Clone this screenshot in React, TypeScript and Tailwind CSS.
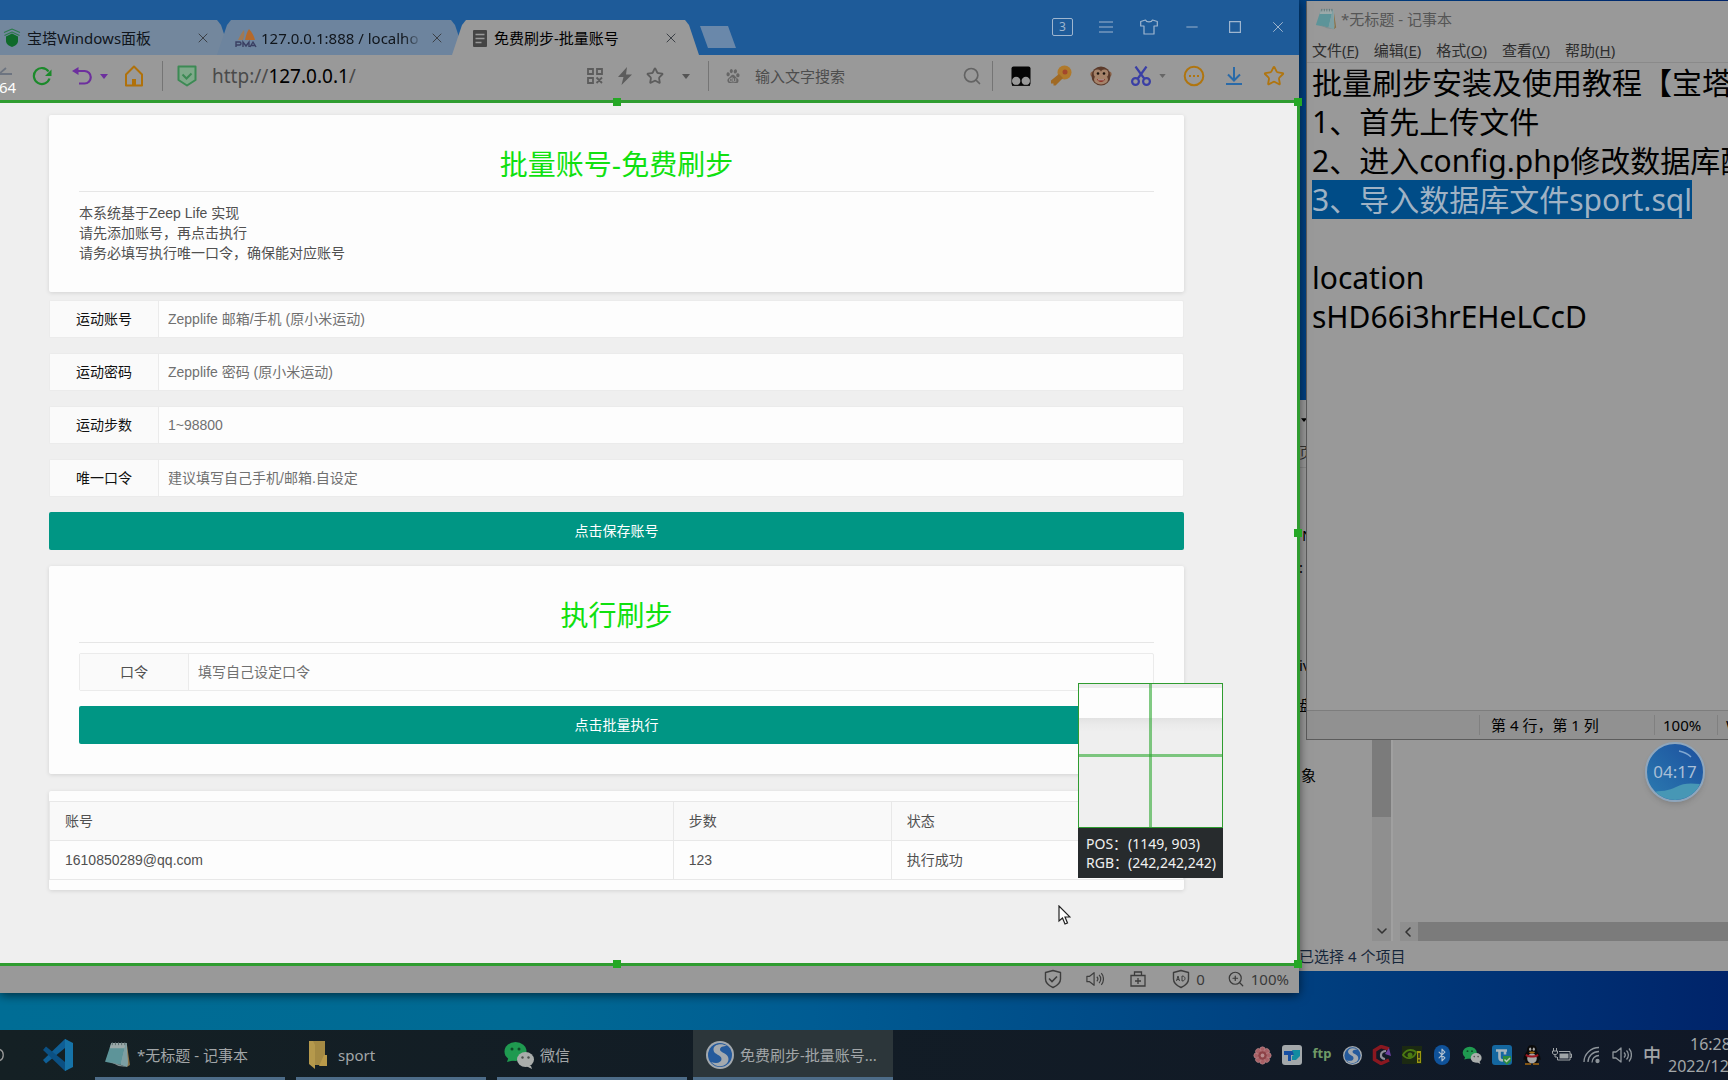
import type { ReactNode } from "react";
import {
  Bluetooth,
  ChevronDown,
  ChevronLeft,
  Menu,
  Minus,
  Search,
  Shirt,
  Square,
  Star,
  X,
  ZoomIn,
} from "lucide-react";
import { RiBaiduFill } from "react-icons/ri";

/* ---------- drawn icons ---------- */

function Caret({ className }: { className: string }) {
  return (
    <svg viewBox="0 0 8 5" className={className} fill="currentColor">
      <path d="M0 0h8L4 5z" />
    </svg>
  );
}

function TreeShield() {
  return (
    <svg viewBox="0 0 18 20" className="h-5 w-[18px] shrink-0" fill="none">
      <path d="M9 1 1 4.500M9 1l8 3.500M9 4 1.500 7.500M9 4l7.500 3.500" stroke="#2d7a4d" strokeWidth="1.200" />
      <path d="M3 8.500l6-3 6 3V13c0 3-3 5-6 6-3-1-6-3-6-6z" fill="#0f6a2b" />
    </svg>
  );
}

function PmaLogo() {
  return (
    <svg viewBox="0 0 22 20" className="h-5 w-[22px] shrink-0" fill="none">
      <path d="M3 12C5 8 7 4 9 2c1 4 0 7-1 10z" fill="#a07a55" />
      <path d="M10 12c1-5 2-8 4-11 3 3 5 7 6 11z" fill="#b5692a" />
      <path d="M1 19v-5h3.500a1.500 1.500 0 0 1 0 3H1M8 19v-5l3 4 3-4v5M15 19l3-5 3 5M16 17.500h4" stroke="#3a3f63" strokeWidth="1.400" />
    </svg>
  );
}

function DocIcon() {
  return (
    <svg viewBox="0 0 14 17" className="h-[17px] w-[14px] shrink-0">
      <rect width="14" height="17" rx="1" fill="#444" />
      <path d="M2.500 4.500h9M2.500 8.500h9M2.500 12.500h6" stroke="#999" strokeWidth="1.500" />
    </svg>
  );
}

function RefreshIcon() {
  return (
    <svg viewBox="0 0 20 20" className="size-5" fill="none" stroke="#1c8a2b" strokeWidth="2.200">
      <path d="M16.500 5.500A8 8 0 1 0 17.500 12.500" />
      <path d="M19.500 3.500v6.500h-6.500z" fill="#1c8a2b" stroke="none" />
    </svg>
  );
}

function UndoIcon() {
  return (
    <svg viewBox="0 0 20 20" className="size-5" fill="none" stroke="#6d2f9e" strokeWidth="2.200">
      <path d="M3 5h9.500a5.700 5.700 0 0 1 0 12.500H7" />
      <path d="M6.500 1v8L0 5z" fill="#6d2f9e" stroke="none" />
    </svg>
  );
}

function HomeIcon() {
  return (
    <svg viewBox="0 0 20 22" className="h-[22px] w-5" fill="none" stroke="#b0710a" strokeWidth="2">
      <path d="M2 20.500V9.500l8-8 8 8v11z" strokeLinejoin="round" />
      <path d="M8 20v-6h4v6" fill="#b0710a" stroke="none" />
    </svg>
  );
}

function SiteShield() {
  return (
    <svg viewBox="0 0 20 22" className="h-[22px] w-5" fill="#7fa98a" stroke="#3c8a54" strokeWidth="2">
      <path d="M1.500 1.500h17v13.500L10 20.500 1.500 15z" strokeLinejoin="round" />
      <path d="M5.500 9.500l4 4 5-5" fill="none" />
    </svg>
  );
}

function QrIcon() {
  return (
    <svg viewBox="0 0 16 16" className="size-4" fill="none" stroke="#5c5c5c" strokeWidth="1.800">
      <path d="M1 1h5v5H1zM10 1h5v5h-5zM1 10h5v5H1zM9.500 9.500l5.500 5.500M15 9.500 9.500 15" />
    </svg>
  );
}

function BoltIcon() {
  return (
    <svg viewBox="0 0 14 18" className="h-[18px] w-[14px]" fill="#5c5c5c">
      <path d="M9 0 0 10h5.500L3.500 18 14 7.500H8z" />
    </svg>
  );
}

function TampermonkeyIcon() {
  return (
    <svg viewBox="0 0 20 20" className="size-5">
      <rect x=".5" y=".5" width="19" height="19" rx="2" fill="#050505" />
      <circle cx="5.200" cy="15" r="4.200" fill="#999" />
      <circle cx="14.800" cy="15" r="4.200" fill="#999" />
      <path d="M1 19.300h18" stroke="#050505" />
    </svg>
  );
}

function KeyIcon() {
  return (
    <svg viewBox="0 0 22 22" className="size-[22px]">
      <circle cx="14.500" cy="7.500" r="7" fill="#b07a2c" />
      <path d="M9 9l4 4-7.500 7.500H3.500v-2H1v-3z" fill="#a06a24" />
      <circle cx="15" cy="7" r="2.500" fill="#a3472c" />
    </svg>
  );
}

function MonkeyIcon() {
  return (
    <svg viewBox="0 0 22 22" className="size-[22px]">
      <circle cx="3" cy="9" r="2.600" fill="#8a6248" />
      <circle cx="19" cy="9" r="2.600" fill="#8a6248" />
      <circle cx="11" cy="11" r="9.500" fill="#5b3a2a" />
      <ellipse cx="7.500" cy="8.500" rx="3.800" ry="4" fill="#a5836a" />
      <ellipse cx="14.500" cy="8.500" rx="3.800" ry="4" fill="#a5836a" />
      <ellipse cx="11" cy="14.500" rx="7" ry="5" fill="#a5836a" />
      <circle cx="8" cy="8.500" r="1.300" fill="#1b120d" />
      <circle cx="14" cy="8.500" r="1.300" fill="#1b120d" />
      <path d="M7 14h8c-1 4-7 4-8 0z" fill="#8d3228" />
      <path d="M8 14.300h6v1H8z" fill="#b5b0aa" />
    </svg>
  );
}

function ScissorsIcon() {
  return (
    <svg viewBox="0 0 20 20" className="size-5" fill="none" stroke="#3a3fa5" strokeWidth="2.200">
      <path d="M4.500 0.500 13.500 13M15.500 0.500 6.500 13" />
      <circle cx="4.500" cy="15.500" r="3.400" />
      <circle cx="15.500" cy="15.500" r="3.400" />
    </svg>
  );
}

function DotsCircle() {
  return (
    <svg viewBox="0 0 22 22" className="size-[22px]" fill="none" stroke="#b0750f" strokeWidth="2">
      <circle cx="11" cy="11" r="9.300" />
      <path d="M6 11h2M10 11h2M14 11h2" />
    </svg>
  );
}

function NotepadIcon({ className }: { className: string }) {
  return (
    <svg viewBox="0 0 26 26" className={className}>
      <path d="M22 3l3 20-3 2z" fill="#8a7247" />
      <path d="M8 2h14l1 20H16z" fill="#8fa5a8" />
      <path d="M7 2h14l-5 21L1 20z" fill="#5d9499" />
      <path d="M7 2h14l-1 5H5.500z" fill="#9aa9a9" />
      <path d="M16 23l5-21 2 21-1 2z" fill="#7c9fa3" />
      <path d="M6 20l10 3 6 2-8-1z" fill="#7f8d8e" />
      <path d="M8 1v3M11 1v3M14 1v3M17 1v3M20 1v3" stroke="#4d6063" strokeWidth=".8" />
    </svg>
  );
}

function VsCodeIcon() {
  return (
    <svg viewBox="0 0 30 34" className="h-[34px] w-[30px]">
      <path d="M22 1l8 4v24l-8 4z" fill="#1673a8" />
      <path d="M22 1 0 22l3 3.500L22 10z" fill="#0f5f96" />
      <path d="M22 33 0 12l3-3.500L22 24z" fill="#0b5083" />
      <path d="M22 1l3 2v28l-3 2z" fill="#1673a8" />
    </svg>
  );
}

function FolderIcon() {
  return (
    <svg viewBox="0 0 20 30" className="h-[30px] w-5">
      <path d="M4 1h13v24H4z" fill="#a48a44" />
      <path d="M16 15h3v11h-8z" fill="#b99a4a" />
      <path d="M1 1h4l2 4v24l-6-5z" fill="#b5994c" />
    </svg>
  );
}

function WeChatIcon({ className }: { className: string }) {
  return (
    <svg viewBox="0 0 30 28" className={className}>
      <path d="M3 21l2-6 6 4z" fill="#1f9a50" />
      <ellipse cx="11.500" cy="10.500" rx="11" ry="9.500" fill="#1f9a50" />
      <circle cx="8" cy="8" r="1.500" fill="#0e4a28" />
      <circle cx="15" cy="8" r="1.500" fill="#0e4a28" />
      <path d="M22 25h5l1 3z" fill="#a9adab" />
      <ellipse cx="21.500" cy="18.500" rx="8.500" ry="7.500" fill="#a9adab" />
      <circle cx="18.500" cy="16.500" r="1.200" fill="#4b504d" />
      <circle cx="24.500" cy="16.500" r="1.200" fill="#4b504d" />
    </svg>
  );
}

function SogouIcon({ className }: { className: string }) {
  return (
    <svg viewBox="0 0 28 28" className={className}>
      <circle cx="14" cy="14" r="14" fill="#a3a9ae" />
      <circle cx="14" cy="14" r="12" fill="#245a9c" />
      <path d="M21 5c-6-3.500-14-1.500-13.500 4 .5 5 8 4.500 8 9 0 3.500-4.500 5-10.500 3 6 7 17.500 4.500 17.500-3C22.500 12 14 12 14 8.500 14 6 17 5 21 5z" fill="#a3a9ae" />
    </svg>
  );
}

function FlowerIcon() {
  const petals = [0, 45, 90, 135, 180, 225, 270, 315];
  return (
    <svg viewBox="0 0 20 20" className="size-[19px]">
      {petals.map((a) => (
        <circle key={a} cx="10" cy="3.800" r="2.900" fill="#a86066" stroke="#b98a8c" strokeWidth=".7" transform={`rotate(${a} 10 10)`} />
      ))}
      <circle cx="10" cy="10" r="4.500" fill="#8d4247" />
      <circle cx="10" cy="10" r="2" fill="#b98a8c" />
    </svg>
  );
}

function TodeskIcon() {
  return (
    <svg viewBox="0 0 20 20" className="size-5">
      <rect width="20" height="20" rx="3" fill="#a3a8ab" />
      <path d="M2 6h10v4H9v6H6v-6H2z" fill="#174fa3" />
      <path d="M10 5h8v6l-4 4h-4v-4l2-1z" fill="#128ba0" />
    </svg>
  );
}

function CIcon() {
  return (
    <svg viewBox="0 0 20 20" className="size-5" fill="none">
      <path d="M17 4 9 1.500 2.500 5.500v9L9 18.500l8-3.500" stroke="#8a1820" strokeWidth="3.500" />
      <path d="M14 6c-6 0-7 7-1 8" stroke="#8f8f9a" strokeWidth="2.200" />
      <path d="M17 3l2 8-6-2z" fill="#6b3fa0" />
    </svg>
  );
}

function NvidiaIcon() {
  return (
    <svg viewBox="0 0 20 18" className="h-[18px] w-5" fill="none">
      <rect width="20" height="18" fill="#1c2a12" />
      <path d="M1 9c3-6 9-6 13-3-2 7-9 8-13 3z" stroke="#4b7a12" strokeWidth="1.800" />
      <circle cx="8" cy="9" r="2.500" fill="#4b7a12" />
      <path d="M15 5h4v12h-4z" fill="#9b9610" />
      <path d="M17 7v5M17 13.500v2" stroke="#222" strokeWidth="1.500" />
    </svg>
  );
}

function TIcon() {
  return (
    <svg viewBox="0 0 20 20" className="size-5" fill="none">
      <rect width="20" height="20" rx="3" fill="#1467a0" />
      <path d="M4 5.500h11M7.500 5.500v7c0 2 1 3 3.500 3M13 5.500v4" stroke="#a7b5bd" strokeWidth="2.600" />
      <path d="M11 11h8v5l-4 4-4-4z" fill="#2c8c3c" />
      <path d="M12.500 14.500l2 2 3.500-3.500" stroke="#b8c8b8" strokeWidth="1.500" />
    </svg>
  );
}

function QQIcon() {
  return (
    <svg viewBox="0 0 18 20" className="h-5 w-[18px]">
      <path d="M9 0c4 0 5 3 5 6 2 3 4 6 3.500 9-1 0-1.500-1-1.500-1 0 3-2 5-7 5s-7-2-7-5c0 0-.5 1-1.500 1C0 12 2 9 4 6c0-3 1-6 5-6z" fill="#0a0a0a" />
      <ellipse cx="9" cy="13.500" rx="4.800" ry="5" fill="#a6a6a6" />
      <ellipse cx="7.200" cy="4.200" rx="1.100" ry="1.600" fill="#aaa" />
      <ellipse cx="10.800" cy="4.200" rx="1.100" ry="1.600" fill="#aaa" />
      <ellipse cx="9" cy="7.500" rx="3" ry="1" fill="#a86a10" />
      <path d="M3 9c4 2 8 2 12 0l.5 2c-4 2-9 2-13 0z" fill="#9c1520" />
      <path d="M2 19h6M10 19h6" stroke="#a86a10" strokeWidth="1.500" />
    </svg>
  );
}

function BatteryIcon() {
  return (
    <svg viewBox="0 0 20 14" className="h-[14px] w-5" fill="none" stroke="#a0a5a8">
      <path d="M7 3.500h11v8.500H5.500V9M18 6h1.500v3.500H18" />
      <path d="M7.500 5.500h9v5h-9z" fill="#a0a5a8" stroke="none" />
      <path d="M1.500 0v3M4.500 0v3M.5 3h5v2c0 2-5 2-5 0zM3 6v3h2" />
    </svg>
  );
}

function WifiIcon() {
  return (
    <svg viewBox="0 0 18 18" className="size-[18px]" fill="none" stroke="#8e959b" strokeWidth="1.300">
      <path d="M1 16C1 8 8 1.500 16 1.500M5 16C5 10 10 5.500 16 5.500M9 16.500C9 12.500 12 9.500 16 9.500" />
      <circle cx="14.500" cy="15" r="1.500" fill="#8e959b" />
    </svg>
  );
}

function SpeakerIcon({ className }: { className: string }) {
  return (
    <svg viewBox="0 0 20 16" className={className} fill="none" stroke="currentColor" strokeWidth="1.300">
      <path d="M1 5h3l5-4v14l-5-4H1z" strokeLinejoin="round" />
      <path d="M12 5.500c1.500 1.500 1.500 3.500 0 5M14.500 3.500c2.500 2.500 2.500 6.500 0 9M17 1.500c3.200 3.500 3.200 9.500 0 13" />
    </svg>
  );
}

function ShieldOutline({ children }: { children: ReactNode }) {
  return (
    <svg viewBox="0 0 18 20" className="h-5 w-[18px]" fill="none" stroke="#3d3d3d" strokeWidth="1.400">
      <path d="M9 1.500 16.500 3.500V10c0 4-3 6.500-7.500 8.500C4.500 16.500 1.500 14 1.500 10V3.500z" strokeLinejoin="round" />
      {children}
    </svg>
  );
}

function BoxPlusIcon() {
  return (
    <svg viewBox="0 0 16 16" className="size-4" fill="none" stroke="#3d3d3d" strokeWidth="1.300">
      <path d="M1 4.500h14v10.500H1zM4.500 4.500V1h7v3.500M8 7v6M5 10h6" />
    </svg>
  );
}

/* ---------- browser window ---------- */

const tabShape =
  "[clip-path:polygon(0_100%,10px_5px,14px_0,calc(100%_-_14px)_0,calc(100%_-_10px)_5px,100%_100%)]";

function CloseX() {
  return (
    <button type="button" aria-label="关闭标签页" className="flex size-4 shrink-0 items-center justify-center text-[#3c4046]">
      <X className="size-4" strokeWidth={1.5} />
    </button>
  );
}

function TitleBar() {
  const control = "flex h-full w-[43px] items-center justify-center";
  return (
    <header className="flex h-[55px] justify-between bg-[#1e5b99]">
      <div className="flex items-end text-[15px] leading-5 text-[#10151b]">
        <div className="flex h-[35px] w-[231px] items-center bg-[#73879d] pt-px pr-5 pl-[3px] [clip-path:polygon(0_100%,0_0,calc(100%_-_14px)_0,calc(100%_-_10px)_5px,100%_100%)]">
          <TreeShield />
          <span className="ml-1.5 grow whitespace-nowrap">宝塔Windows面板</span>
          <CloseX />
        </div>
        <div className={`-ml-3.5 flex h-[35px] w-[248px] items-center bg-[#6d849e] pt-px pr-5 pl-[18px] ${tabShape}`}>
          <PmaLogo />
          <span className="ml-1 min-w-0 grow overflow-hidden whitespace-nowrap [mask-image:linear-gradient(to_right,black_88%,transparent)]">
            127.0.0.1:888 / localho
          </span>
          <span className="ml-1.5 flex"><CloseX /></span>
        </div>
        <div className={`-ml-[13px] flex h-[35px] w-[247px] items-center bg-[#999] pt-px pr-5 pl-[21px] ${tabShape}`}>
          <DocIcon />
          <span className="ml-[7px] grow whitespace-nowrap text-black">免费刷步-批量账号</span>
          <CloseX />
        </div>
        <button
          type="button"
          aria-label="新标签页"
          className="mb-[7px] ml-px h-[22px] w-9 bg-[#6a88aa] [clip-path:polygon(0_0,28px_0,100%_100%,8px_100%)]"
        />
      </div>
      <div className="flex h-[54px] text-[#9fb6cf]">
        <button type="button" className={control}>
          <span className="flex h-[18px] w-[21px] items-center justify-center rounded-xs border border-[#9fb6cf] text-xs leading-4">3</span>
        </button>
        <button type="button" aria-label="菜单" className={control}>
          <svg viewBox="0 0 14 14" className="size-[14px]" stroke="currentColor" strokeWidth="1.200">
            <path d="M0 2h14M0 7h14M0 12h14" />
          </svg>
        </button>
        <button type="button" aria-label="皮肤" className={control}>
          <svg viewBox="0 0 18 16" className="h-4 w-[18px]" fill="none" stroke="currentColor" strokeWidth="1.200">
            <path d="M5.500 1 .7 2.500v4.500H4v8h10V7h3.300V2.500L12.500 1c-1 2.500-6 2.500-7 0z" strokeLinejoin="round" />
          </svg>
        </button>
        <button type="button" aria-label="最小化" className={control}><Minus className="size-[18px]" strokeWidth={1.3} /></button>
        <button type="button" aria-label="最大化" className={control}>
          <svg viewBox="0 0 12 12" className="size-3" fill="none" stroke="currentColor" strokeWidth="1.200">
            <path d="M.6.6h10.800v10.800H.6z" />
          </svg>
        </button>
        <button type="button" aria-label="关闭" className={control}><X className="size-[18px]" strokeWidth={1.3} /></button>
      </div>
    </header>
  );
}

function Toolbar() {
  const ext = "flex h-full w-10 items-center justify-center";
  return (
    <div className="relative flex h-[45px] items-center bg-[#999] pb-[3px]">
      <div className="flex w-[162px] items-center">
        <svg viewBox="0 0 12 14" className="mb-1 h-[14px] w-3" fill="none" stroke="#6d7480" strokeWidth="1.800">
          <path d="M6 1-1 7h13" />
        </svg>
        <span className="ml-5 flex"><RefreshIcon /></span>
        <span className="ml-5 flex"><UndoIcon /></span>
        <Caret className="ml-2 h-[5px] w-2 text-[#6d2f9e]" />
        <span className="ml-4 flex"><HomeIcon /></span>
      </div>
      <span className="absolute top-6 left-0 -ml-px text-[15px] leading-4 text-white">64</span>
      <div className="h-[30px] w-px bg-[#757575]" />
      <div className="flex min-w-0 grow items-center pl-3.5">
        <SiteShield />
        <div className="ml-[15px] grow text-[19px] leading-6 text-[#4a4a4a]">
          http://<span className="text-black">127.0.0.1</span>/
        </div>
        <QrIcon />
        <span className="ml-[15px] flex"><BoltIcon /></span>
        <Star className="ml-3.5 size-[18px] text-[#5c5c5c]" strokeWidth={2.4} />
        <Caret className="mr-[18px] ml-[18px] h-[5px] w-2 text-[#555]" />
      </div>
      <div className="h-[30px] w-px bg-[#757575]" />
      <div className="flex w-[283px] items-center pr-2.5 pl-[15px]">
        <RiBaiduFill className="size-[18px] shrink-0 text-[#666]" />
        <input
          aria-label="搜索"
          placeholder="输入文字搜索"
          className="ml-[13px] min-w-0 grow bg-transparent text-[15px] leading-5 placeholder:text-[#4d4d4d]"
        />
        <Search className="size-5 shrink-0 text-[#636363]" strokeWidth={2} />
      </div>
      <div className="h-[30px] w-px bg-[#757575]" />
      <div className="flex h-full items-center pr-[5px] pl-2">
        <button type="button" aria-label="脚本" className={ext}><TampermonkeyIcon /></button>
        <button type="button" aria-label="密码" className={ext}><KeyIcon /></button>
        <button type="button" aria-label="猴子" className={ext}><MonkeyIcon /></button>
        <button type="button" aria-label="截图" className="flex h-full w-[53px] items-center pl-2.5">
          <ScissorsIcon />
          <Caret className="ml-2 h-1 w-[7px] text-[#666]" />
        </button>
        <button type="button" aria-label="更多" className={ext}><DotsCircle /></button>
        <button type="button" aria-label="下载" className={ext}>
          <svg viewBox="0 0 18 18" className="size-[18px]" fill="none" stroke="#2a6aa8" strokeWidth="2">
            <path d="M9 0v13M3 7.500l6 6 6-6M1 17h16" />
          </svg>
        </button>
        <button type="button" aria-label="收藏" className={ext}><Star className="size-[22px] text-[#b0750f]" strokeWidth={2} /></button>
      </div>
    </div>
  );
}

const fields = [
  { id: "account", label: "运动账号", hint: "Zepplife 邮箱/手机 (原小米运动)" },
  { id: "password", label: "运动密码", hint: "Zepplife 密码 (原小米运动)" },
  { id: "steps", label: "运动步数", hint: "1~98800" },
  { id: "token", label: "唯一口令", hint: "建议填写自己手机/邮箱.自设定" },
];

function Field({ id, label, hint, dark }: { id: string; label: string; hint: string; dark?: boolean }) {
  return (
    <div className="flex h-[38px] rounded-xs border border-[#ebebeb] bg-[#fdfdfd]">
      <label
        htmlFor={id}
        className={`flex w-[109px] shrink-0 items-center justify-center border-r border-[#ebebeb] bg-[#fafafa] ${dark ? "text-[#111]" : "text-[#505050]"}`}
      >
        {label}
      </label>
      <input id={id} placeholder={hint} className="min-w-0 grow bg-transparent pl-[9px] placeholder:text-[#707070]" />
    </div>
  );
}

function GreenButton({ children }: { children: ReactNode }) {
  return (
    <button type="button" className="block h-[38px] w-full rounded-xs bg-[#009684] text-center text-white">
      {children}
    </button>
  );
}

function CardTitle({ children }: { children: ReactNode }) {
  return (
    <h2 className="border-b border-[#e6e6e6] pb-1 text-center text-[28px] leading-[42px] text-[#10e010]">{children}</h2>
  );
}

const card = "rounded-xs bg-[#fdfdfd] shadow-[0_1px_4px_rgba(0,0,0,0.12)]";

function StepsPage() {
  return (
    <main className="relative grow bg-[#efefef] pt-[15px] pr-[115px] pb-[75px] pl-[49px] font-['Liberation_Sans','Noto_Sans_CJK_SC',sans-serif] text-sm leading-5 text-[#505050]">
      <section className={`${card} px-[30px] pt-[30px] pb-[29px]`}>
        <CardTitle>批量账号-免费刷步</CardTitle>
        <p className="mt-[11px]">
          本系统基于Zeep Life 实现
          <br />
          请先添加账号，再点击执行
          <br />
          请务必填写执行唯一口令，确保能对应账号
        </p>
      </section>
      <form className="mt-2 flex flex-col gap-[15px]">
        {fields.map((f) => (
          <Field key={f.id} {...f} dark />
        ))}
        <GreenButton>点击保存账号</GreenButton>
      </form>
      <section className={`${card} mt-4 px-[30px] pt-[30px] pb-[30px]`}>
        <CardTitle>执行刷步</CardTitle>
        <form className="mt-2.5 flex flex-col gap-[15px]">
          <Field id="run-token" label="口令" hint="填写自己设定口令" />
          <GreenButton>点击批量执行</GreenButton>
        </form>
      </section>
      <section className={`${card} mt-[17px] py-2.5`}>
        <table className="w-full table-fixed border-collapse text-left">
          <colgroup>
            <col className="w-[55%]" />
            <col className="w-[218px]" />
            <col />
          </colgroup>
          <thead>
            <tr className="h-[39px] bg-[#f9f9f9]">
              {["账号", "步数", "状态"].map((h) => (
                <th key={h} className="border border-[#e8e8e8] px-[15px] font-normal">{h}</th>
              ))}
            </tr>
          </thead>
          <tbody>
            <tr className="h-[39px]">
              {["1610850289@qq.com", "123", "执行成功"].map((c) => (
                <td key={c} className="border border-[#e8e8e8] px-[15px]">{c}</td>
              ))}
            </tr>
          </tbody>
        </table>
      </section>
      <CaptureOverlay />
    </main>
  );
}

/* Region frame, magnifier and pointer of the capture tool, floating over the page. */
function CaptureOverlay() {
  const handle = "absolute size-2 bg-[#25a825]";
  return (
    <>
      <div className="pointer-events-none absolute inset-y-0 right-[-1px] left-0 border-y-[3px] border-r-[3px] border-[#2f9c30]">
        <span className={`${handle} -top-[5px] left-[613px]`} />
        <span className={`${handle} -bottom-[5px] left-[613px]`} />
        <span className={`${handle} -top-[5px] -right-[5px]`} />
        <span className={`${handle} -right-[5px] -bottom-[5px]`} />
        <span className={`${handle} top-1/2 -right-[5px] -mt-1`} />
      </div>
      <div className="absolute top-[583px] right-[76px] w-[145px] font-['Noto_Sans','Noto_Sans_CJK_SC',sans-serif] text-sm leading-[19px] text-[#f0f0f0]">
        <div className="relative h-[145px] border border-[#2f9c30] bg-[linear-gradient(#ececec_0_4px,#fdfdfd_4px_34px,#e2e2e2_34px,#eaeaea_40px,#efefef_48px)]">
          <span className="absolute inset-y-0 left-[70px] w-[3px] bg-[#2fa832]/60" />
          <span className="absolute inset-x-0 top-[70px] h-[3px] bg-[#2fa832]/60" />
        </div>
        <div className="bg-[#272b2d] py-1.5 pl-2 whitespace-nowrap">
          <div className="flex"><span className="w-[42px]">POS：</span>(1149, 903)</div>
          <div className="flex"><span className="w-[42px]">RGB：</span>(242,242,242)</div>
        </div>
      </div>
      <svg viewBox="0 0 13 20" className="absolute top-[805px] right-[228px] h-5 w-[13px]">
        <path d="M1 1v15l3.500-3 2.500 6 2.500-1-2.500-6H12z" fill="#fff" stroke="#222" strokeWidth="1.200" />
      </svg>
    </>
  );
}

function StatusBar() {
  return (
    <footer className="flex h-[27px] items-center justify-end bg-[#999] pr-2.5 pb-px text-[15px] leading-5 text-[#3a3a3a]">
      <ShieldOutline><path d="M5 9.500l3 3 5-5" strokeWidth="1.600" /></ShieldOutline>
      <SpeakerIcon className="ml-6 h-4 w-[18px] text-[#3d3d3d]" />
      <span className="ml-[26px] flex"><BoxPlusIcon /></span>
      <span className="ml-[26px] flex">
        <ShieldOutline>
          <path d="M4.500 12l1.500-5 1.500 5M5 10.500h2M10 7v5c4 0 4-5 0-5z" strokeWidth="1" />
        </ShieldOutline>
      </span>
      <span className="ml-1.5">0</span>
      <ZoomIn className="ml-[22px] size-[18px]" strokeWidth={1.6} />
      <span className="ml-1.5">100%</span>
    </footer>
  );
}

/* ---------- windows on the right ---------- */

function Explorer() {
  return (
    <div className="absolute inset-x-0 top-[400px] bottom-[59px] flex flex-col bg-[#989898] text-[15px] leading-5 text-black">
      <div className="flex min-h-0 grow">
        <div className="flex w-[73px] flex-col overflow-hidden">
          <Caret className="mt-[18px] ml-0.5 h-1 w-1.5 shrink-0" />
          <span className="mt-5 pb-[5px] text-[#333]">页</span>
          <span className="border-t border-[#888] pt-[57px] pl-[3px]">N</span>
          <span className="mt-3">:</span>
          <span className="mt-[78px]">iv</span>
          <span className="mt-5">盘</span>
          <span className="mt-[50px] pl-0.5">象</span>
        </div>
        <div className="flex w-[19px] flex-col items-center bg-[#8f8f8f]">
          <div className="w-full grow-[417] bg-[#7b7b7b]" />
          <div className="grow-[104]" />
          <div className="flex h-5 items-center text-[#333]"><ChevronDown className="size-4" strokeWidth={2.4} /></div>
        </div>
        <div className="flex min-w-0 grow flex-col justify-end border-l-2 border-[#a0a0a0] pl-[7px]">
          <div className="flex h-[19px] bg-[#8f8f8f]">
            <div className="flex w-[18px] items-center text-[#333]"><ChevronLeft className="size-4" strokeWidth={2.4} /></div>
            <div className="grow bg-[#7b7b7b]" />
          </div>
        </div>
      </div>
      <div className="h-[30px] pt-[5px] text-[#16263a]">已选择 4 个项目</div>
    </div>
  );
}

function Notepad() {
  const menus: [string, string][] = [["文件", "F"], ["编辑", "E"], ["格式", "O"], ["查看", "V"], ["帮助", "H"]];
  return (
    <div className="absolute top-px right-0 bottom-[290px] left-[7px] flex flex-col overflow-hidden border-b border-l border-[#5c5c5c] bg-[#999] text-[15px] leading-5 whitespace-nowrap">
      <div className="flex h-9 shrink-0 items-center pl-2 text-[#555]">
        <NotepadIcon className="size-[22px]" />
        <span className="ml-1">*无标题 - 记事本</span>
      </div>
      <nav className="flex h-[26px] shrink-0 items-center gap-[15px] border-b border-[#8a8a8a] pl-[5px] text-[#2e2e2e]">
        {menus.map(([name, key]) => (
          <button type="button" key={key}>{name}(<u>{key}</u>)</button>
        ))}
      </nav>
      <div className="grow pl-[5px] text-[30px] leading-[39px] text-black">
        <p>批量刷步安装及使用教程【宝塔</p>
        <p>1、首先上传文件</p>
        <p>2、进入config.php修改数据库配</p>
        <p className="w-fit bg-[#004c87] text-[#9fb2c4]">3、导入数据库文件sport.sql</p>
        <p>&nbsp;</p>
        <p>location</p>
        <p>sHD66i3hrEHeLCcD</p>
      </div>
      <div className="flex h-[29px] shrink-0 items-center justify-end border-t border-[#7d7d7d] bg-[#919191] text-black">
        <span className="w-[175px] border-l border-[#808080] pl-[11px]">第 4 行，第 1 列</span>
        <span className="w-[63px] border-l border-[#808080] pl-2">100%</span>
        <span className="w-[11px] overflow-hidden border-l border-[#808080] pl-2">W</span>
      </div>
    </div>
  );
}

function TimerBubble() {
  return (
    <div className="absolute top-[742px] right-[23px] flex size-[60px] items-center justify-center overflow-hidden rounded-full border-2 border-[#8ea6bd] bg-linear-to-tr from-[#2c7bb0] to-[#1d4f9e] text-[17px] text-[#a9bfd6] shadow-md">
      <svg viewBox="0 0 56 56" className="absolute inset-0 size-full" fill="none">
        <path d="M4 48c10-1 18-1 25-5s14-4 24-3C48 52 38 56 28 56S9 53 4 48z" fill="#4797b5" />
        <path d="M32 7c5 1 9 3 12 6" stroke="#7fa6d0" strokeWidth="1.500" />
      </svg>
      <span className="relative">04:17</span>
    </div>
  );
}

/* ---------- taskbar ---------- */

function Task({ icon, label, className }: { icon: ReactNode; label: string; className: string }) {
  return (
    <button type="button" className={`flex h-full items-center border-b-[3px] border-[#4d6c88] pt-0.5 ${className}`}>
      {icon}
      <span className="ml-1.5 whitespace-nowrap">{label}</span>
    </button>
  );
}

function Taskbar() {
  const tray: ReactNode[] = [
    <FlowerIcon />,
    <TodeskIcon />,
    <span className="pb-1 text-[13px] font-bold text-[#6f9a66]">ftp</span>,
    <SogouIcon className="size-[19px]" />,
    <CIcon />,
    <NvidiaIcon />,
    <span className="flex h-5 w-4 items-center justify-center rounded-lg bg-[#0f529a] text-[#b0c0d0]">
      <Bluetooth className="size-3.5" />
    </span>,
    <WeChatIcon className="h-[18px] w-5" />,
    <TIcon />,
    <QQIcon />,
    <BatteryIcon />,
    <WifiIcon />,
    <SpeakerIcon className="h-4 w-5 text-[#8e959b]" />,
    <span className="text-lg font-medium">中</span>,
  ];
  return (
    <footer className="flex h-[50px] shrink-0 items-center justify-between bg-linear-to-r from-[#142024] to-[#101827] text-[15px] leading-5 text-[#a2a6a8]">
      <div className="flex h-full items-center">
        <svg viewBox="0 0 5 14" className="h-[14px] w-[5px]" fill="none" stroke="#999" strokeWidth="1.300">
          <path d="M-2 1c7 1 7 11 0 12" />
        </svg>
        <span className="mr-[22px] ml-[38px] flex"><VsCodeIcon /></span>
        <Task icon={<NotepadIcon className="size-[27px]" />} label="*无标题 - 记事本" className="w-[190px] pl-[9px]" />
        <Task icon={<FolderIcon />} label="sport" className="ml-[11px] w-[190px] gap-1 pl-3" />
        <Task icon={<WeChatIcon className="h-7 w-[30px]" />} label="微信" className="ml-[11px] w-[190px] pl-[7px]" />
        <Task icon={<SogouIcon className="size-7" />} label="免费刷步-批量账号..." className="ml-1.5 w-[200px] bg-[#2c363a] pl-[13px]" />
      </div>
      <div className="flex h-full items-center">
        {tray.map((icon, i) => (
          <div key={i} className="flex w-[30px] items-center justify-center">{icon}</div>
        ))}
        <div className="w-[61px] overflow-hidden pl-px text-base leading-[22px] whitespace-nowrap">
          <div className="pl-[22px]">16:28</div>
          <div>2022/12</div>
        </div>
      </div>
    </footer>
  );
}

export default function App() {
  return (
    <div className="flex min-h-screen flex-col overflow-hidden bg-[linear-gradient(90deg,#006d95_0%,#006a94_30%,#005c93_47%,#004080_75%,#00246a_100%)] font-['Noto_Sans','Noto_Sans_CJK_SC',sans-serif]">
      <div className="flex grow">
        <div className="relative z-10 mb-[37px] flex min-w-0 grow flex-col shadow-[0_2px_10px_rgba(0,0,0,0.6)]">
          <TitleBar />
          <Toolbar />
          <StepsPage />
          <StatusBar />
        </div>
        <div className="relative w-[429px] shrink-0">
          <Explorer />
          <Notepad />
          <TimerBubble />
        </div>
      </div>
      <Taskbar />
    </div>
  );
}
